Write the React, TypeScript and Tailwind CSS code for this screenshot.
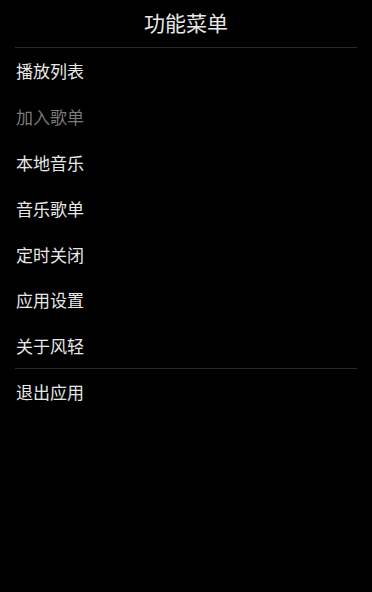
const items = [
  { label: "播放列表", disabled: false },
  { label: "加入歌单", disabled: true },
  { label: "本地音乐", disabled: false },
  { label: "音乐歌单", disabled: false },
  { label: "定时关闭", disabled: false },
  { label: "应用设置", disabled: false },
  { label: "关于风轻", disabled: false, divider: true },
  { label: "退出应用", disabled: false },
];

export default function App() {
  return (
    <div
      className="w-[372px] h-[592px] bg-black text-[#e8e8e8] flex flex-col"
      style={{ fontFamily: '"Noto Sans CJK SC", "Noto Sans", sans-serif' }}
    >
      <div className="h-[47px] flex items-center justify-center text-[21px] leading-none pb-[2px]">
        功能菜单
      </div>
      <div className="mx-[15px] h-px bg-[#2a2a2a]" />

      <div className="flex flex-col">
        {items.map((item) => (
          <div key={item.label}>
            <div
              className={
                "flex items-center px-[16px] text-[17px] leading-none " +
                (item.divider ? "h-[44.8px] " : "h-[45.8px] ") +
                (item.disabled ? "text-[#7a7a7a]" : "text-[#e8e8e8]")
              }
            >
              {item.label}
            </div>
            {item.divider && <div className="mx-[15px] h-px bg-[#2a2a2a]" />}
          </div>
        ))}
      </div>
    </div>
  );
}
